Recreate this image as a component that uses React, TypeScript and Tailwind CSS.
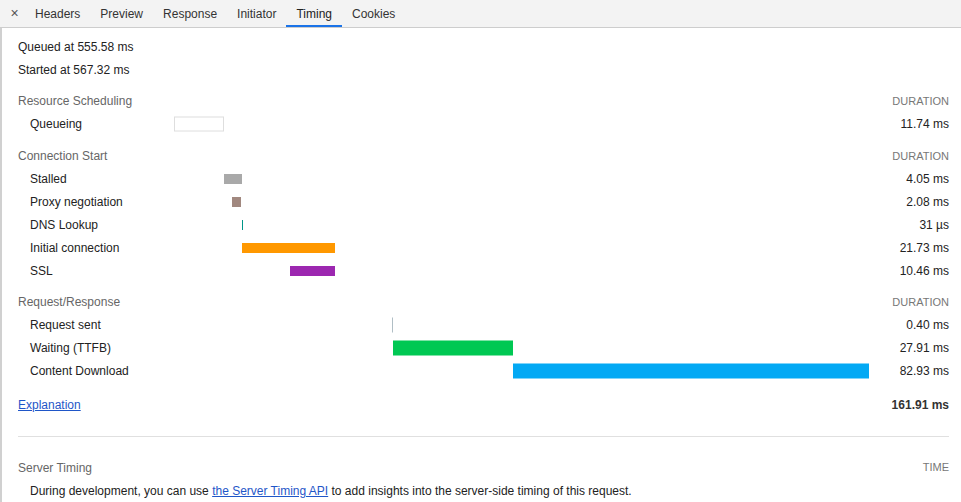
import React from "react";

type Bar = { left: number; width: number; color: string; h: number; outline?: boolean };
type Row = { label: string; value: string; bar: Bar };

const sections: { title: string; mt: string; rows: Row[] }[] = [
  {
    title: "Resource Scheduling",
    mt: "mt-[9px]",
    rows: [
      { label: "Queueing", value: "11.74 ms", bar: { left: 0, width: 50, color: "#ffffff", h: 15, outline: true } },
    ],
  },
  {
    title: "Connection Start",
    mt: "mt-[10px]",
    rows: [
      { label: "Stalled", value: "4.05 ms", bar: { left: 50, width: 18, color: "#a9a9a9", h: 10 } },
      { label: "Proxy negotiation", value: "2.08 ms", bar: { left: 58, width: 9, color: "#a1887f", h: 10 } },
      { label: "DNS Lookup", value: "31 µs", bar: { left: 68, width: 1, color: "#009688", h: 10 } },
      { label: "Initial connection", value: "21.73 ms", bar: { left: 68, width: 93, color: "#ff9800", h: 10 } },
      { label: "SSL", value: "10.46 ms", bar: { left: 116, width: 45, color: "#9c27b0", h: 10 } },
    ],
  },
  {
    title: "Request/Response",
    mt: "mt-[9px]",
    rows: [
      { label: "Request sent", value: "0.40 ms", bar: { left: 218, width: 1, color: "#b0bec5", h: 15 } },
      { label: "Waiting (TTFB)", value: "27.91 ms", bar: { left: 219, width: 120, color: "#00c853", h: 15 } },
      { label: "Content Download", value: "82.93 ms", bar: { left: 339, width: 356, color: "#03a9f4", h: 15 } },
    ],
  },
];

const tabs = ["Headers", "Preview", "Response", "Initiator", "Timing", "Cookies"];

export default function App() {
  return (
    <div
      className="w-[961px] h-[502px] overflow-hidden bg-white text-[12px] text-[#222]"
      style={{ fontFamily: '"Liberation Sans", Arial, sans-serif' }}
    >
      {/* Tab bar */}
      <div className="flex h-[28px] items-stretch bg-[#f3f3f3] border-b border-[#cdcdcd]">
        <div className="w-[25px] pl-[4px] flex items-center justify-center text-[#555] text-[14px] pb-[1px]">×</div>
        {tabs.map((t) => (
          <div
            key={t}
            className={
              t === "Timing"
                ? "px-[10px] flex items-center text-[#222] border-b-2 border-[#1a73e8] pt-[2px]"
                : "px-[10px] flex items-center text-[#333] border-b-2 border-transparent pt-[2px]"
            }
          >
            {t}
          </div>
        ))}
      </div>

      {/* Content */}
      <div className="border-l-2 border-[#d0d0d0] h-[474px] pl-[16px] pr-[12px] pt-[7px]">
        <div className="h-[23px] flex items-center">Queued at 555.58 ms</div>
        <div className="h-[23px] flex items-center">Started at 567.32 ms</div>

        {sections.map((s) => (
          <div key={s.title} className={s.mt}>
            <div className="h-[22px] flex items-center justify-between text-[#666]">
              <span>{s.title}</span>
              <span className="text-[11px] text-[#777]">DURATION</span>
            </div>
            {s.rows.map((r) => (
              <div key={r.label} className="h-[23px] flex items-center">
                <div className="w-[156px] pl-[12px] shrink-0">{r.label}</div>
                <div className="relative w-[695px] h-full shrink-0">
                  <div
                    className={
                      r.bar.outline
                        ? "absolute top-1/2 -translate-y-1/2 border border-[#dedede] bg-white"
                        : "absolute top-1/2 -translate-y-1/2"
                    }
                    style={{
                      left: r.bar.left,
                      width: r.bar.width,
                      height: r.bar.h,
                      backgroundColor: r.bar.outline ? undefined : r.bar.color,
                    }}
                  />
                </div>
                <div className="flex-1 text-right">{r.value}</div>
              </div>
            ))}
          </div>
        ))}

        <div className="mt-[11px] h-[23px] flex items-center justify-between">
          <a className="text-[#1f56c8] underline cursor-pointer">Explanation</a>
          <span className="font-bold text-[#333]">161.91 ms</span>
        </div>

        <div className="mt-[20px] border-t border-[#e0e0e0]" />

        <div className="mt-[19px] h-[23px] flex items-center justify-between text-[#666]">
          <span>Server Timing</span>
          <span className="text-[11px] text-[#777]">TIME</span>
        </div>
        <div className="h-[23px] flex items-center pl-[12px]">
          <span>
            During development, you can use{" "}
            <a className="text-[#1f56c8] underline cursor-pointer">the Server Timing API</a> to add insights into the
            server-side timing of this request.
          </span>
        </div>
      </div>
    </div>
  );
}
